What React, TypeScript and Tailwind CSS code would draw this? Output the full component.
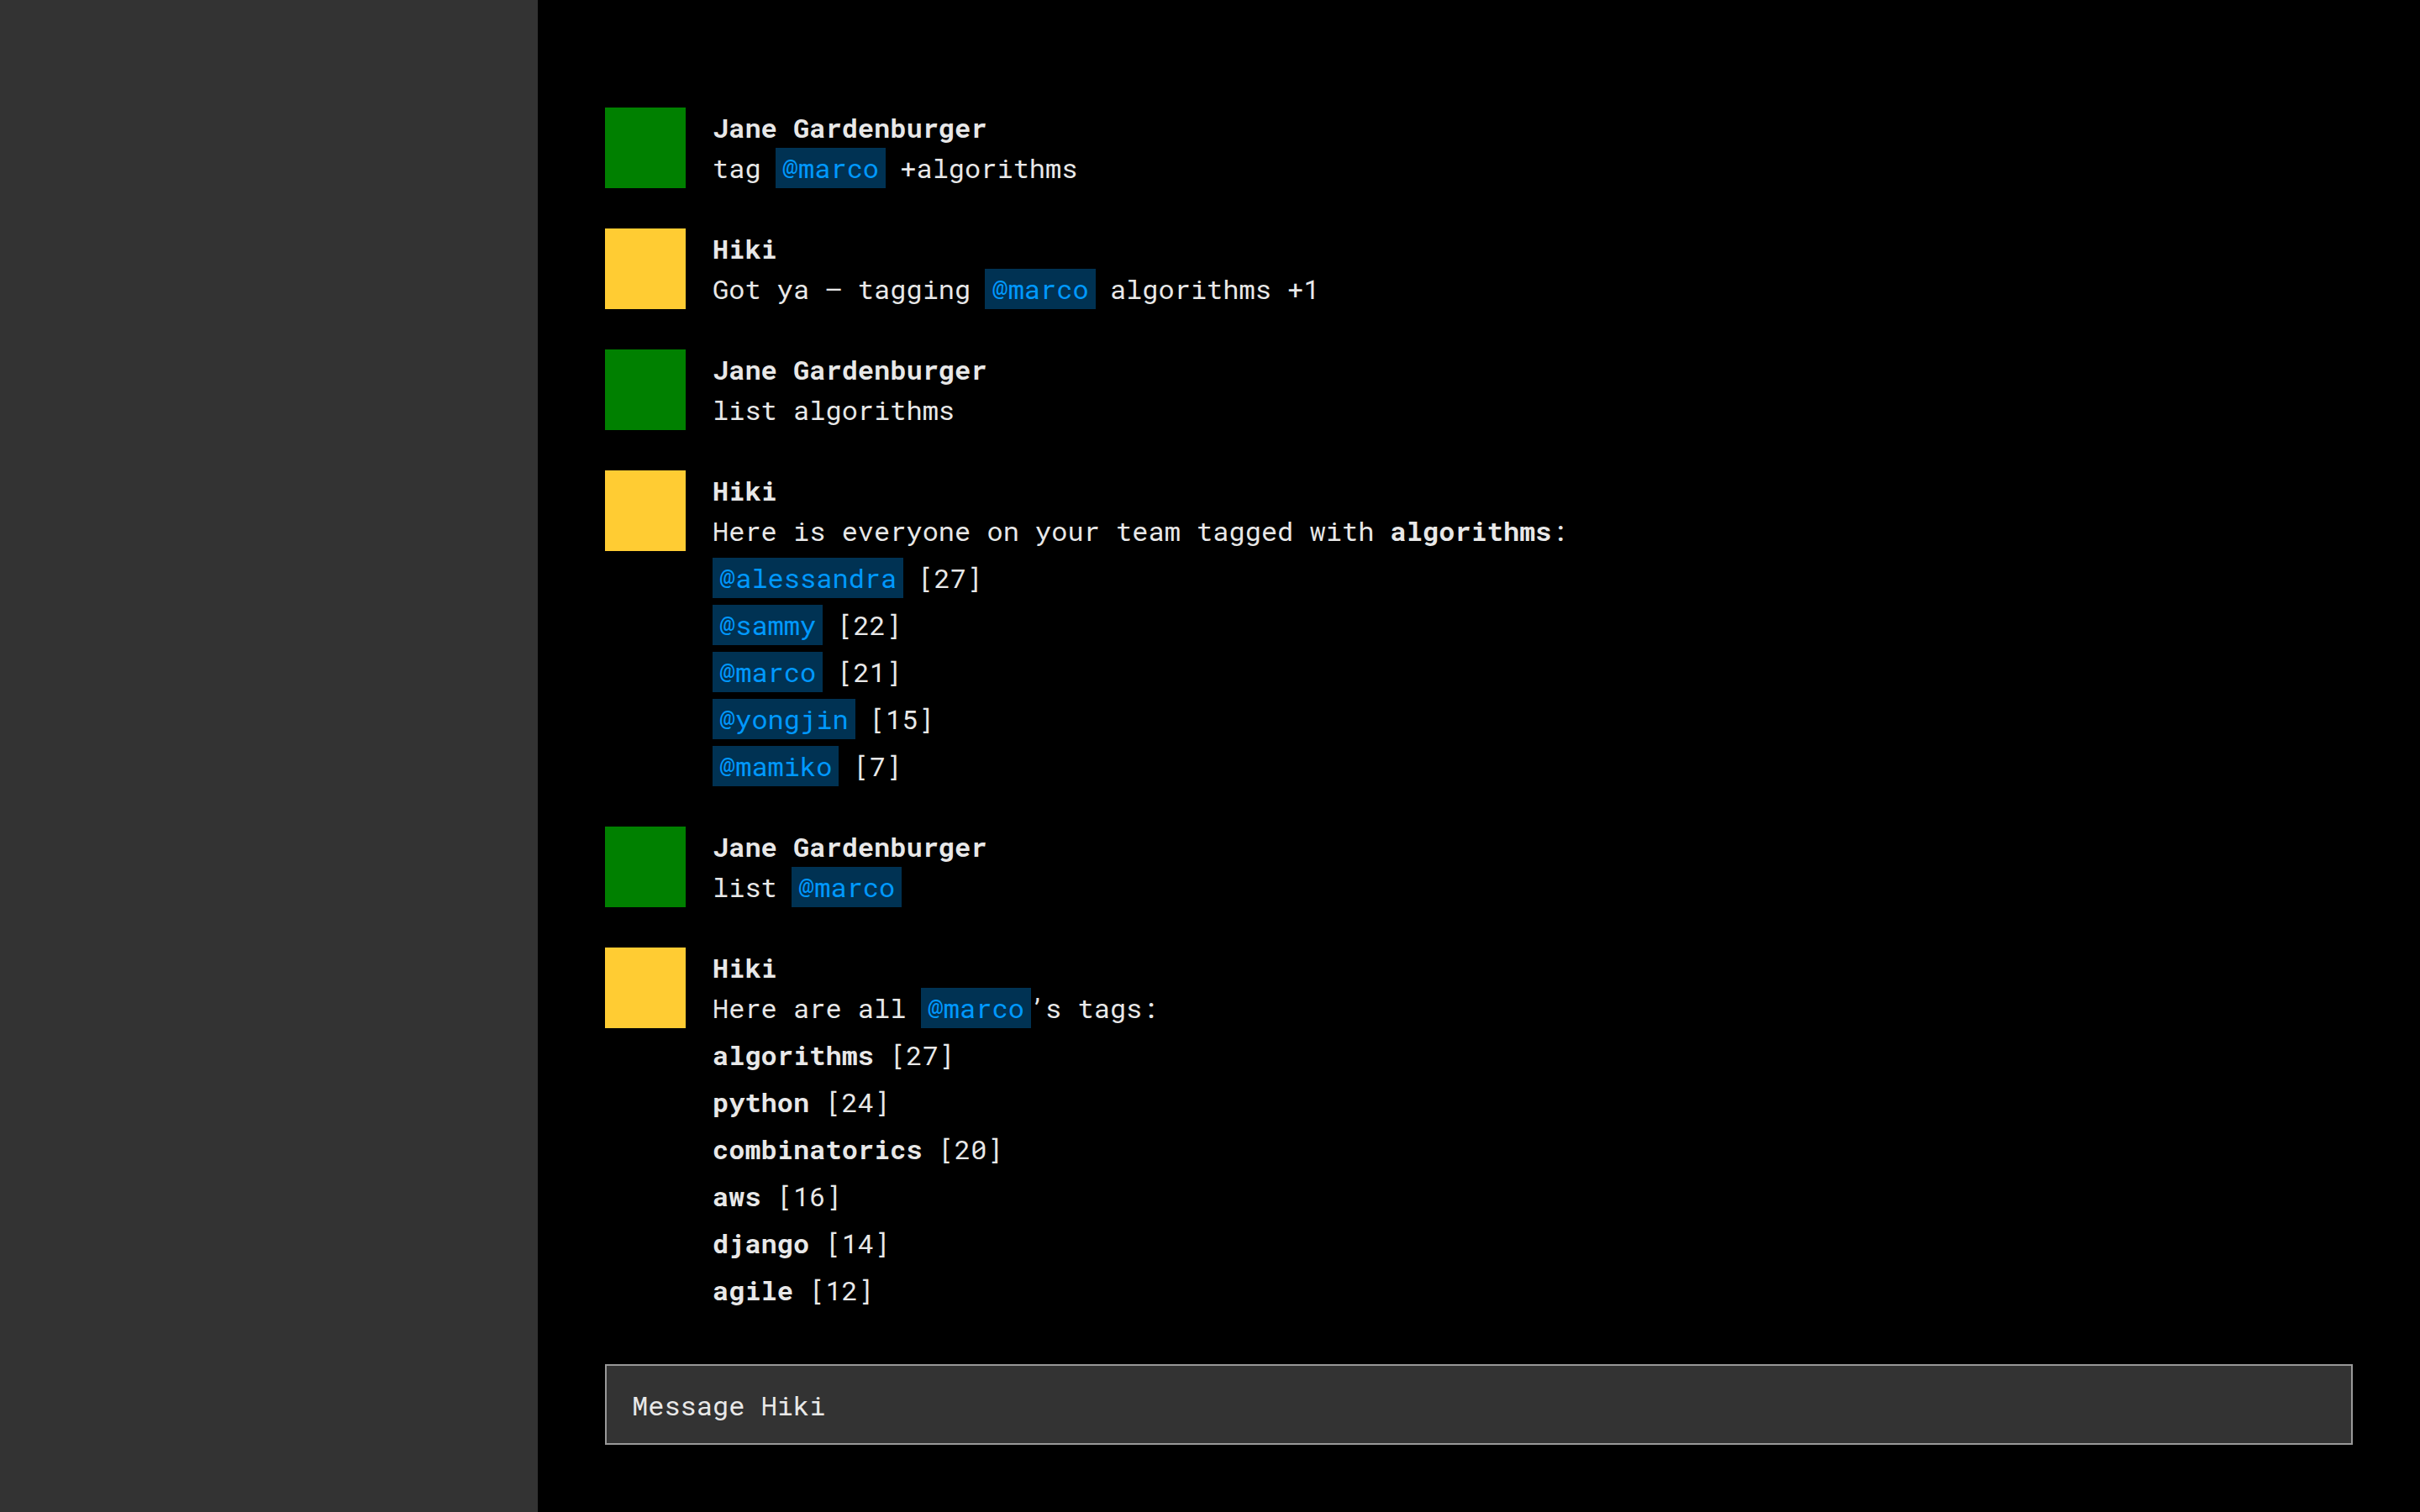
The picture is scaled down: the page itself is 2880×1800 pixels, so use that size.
import type { ReactNode } from "react";

function Mention({ name }: { name: string }) {
  return (
    <a href={`#${name}`} className="-mx-0.5 inline-block bg-[#003253] px-2 text-[#0099ff]">
      @{name}
    </a>
  );
}

function Message({ author, children }: { author: "Jane Gardenburger" | "Hiki"; children: ReactNode }) {
  return (
    <article className="flex gap-8">
      <div className={`size-24 shrink-0 ${author === "Hiki" ? "bg-[#ffcc33]" : "bg-[#008000]"}`} />
      <div className="min-w-0 flex-1">
        <h2 className="font-bold">{author}</h2>
        {children}
      </div>
    </article>
  );
}

const people: [string, number][] = [
  ["alessandra", 27],
  ["sammy", 22],
  ["marco", 21],
  ["yongjin", 15],
  ["mamiko", 7],
];

const tags: [string, number][] = [
  ["algorithms", 27],
  ["python", 24],
  ["combinatorics", 20],
  ["aws", 16],
  ["django", 14],
  ["agile", 12],
];

export default function App() {
  return (
    <div className="flex min-h-screen bg-black font-['Roboto_Mono','DejaVu_Sans_Mono',monospace] text-[32px] leading-[48px] text-[#e8e8e8]">
      <aside className="w-160 shrink-0 bg-[#333333]" />
      <main className="flex min-w-0 flex-1 flex-col justify-between gap-16 px-20 pt-32 pb-20">
        <section className="flex flex-col gap-12">
          <Message author="Jane Gardenburger">
            <p>
              tag <Mention name="marco" /> +algorithms
            </p>
          </Message>
          <Message author="Hiki">
            <p>
              Got ya – tagging <Mention name="marco" /> algorithms +1
            </p>
          </Message>
          <Message author="Jane Gardenburger">
            <p>list algorithms</p>
          </Message>
          <Message author="Hiki">
            <p>
              Here is everyone on your team tagged with <strong>algorithms</strong>:
            </p>
            <ul className="mt-2 flex flex-col gap-2 pl-0.5">
              {people.map(([name, count]) => (
                <li key={name}>
                  <Mention name={name} /> [{count}]
                </li>
              ))}
            </ul>
          </Message>
          <Message author="Jane Gardenburger">
            <p>
              list <Mention name="marco" />
            </p>
          </Message>
          <Message author="Hiki">
            <p>
              Here are all <Mention name="marco" />’s tags:
            </p>
            <ul className="mt-2 flex flex-col gap-2">
              {tags.map(([name, count]) => (
                <li key={name}>
                  <strong>{name}</strong> [{count}]
                </li>
              ))}
            </ul>
          </Message>
        </section>
        <input
          type="text"
          aria-label="Message Hiki"
          placeholder="Message Hiki"
          className="h-24 w-full border-2 border-[#999999] bg-[#333333] px-[30px] outline-none placeholder:text-[#e8e8e8] placeholder:opacity-100"
        />
      </main>
    </div>
  );
}
